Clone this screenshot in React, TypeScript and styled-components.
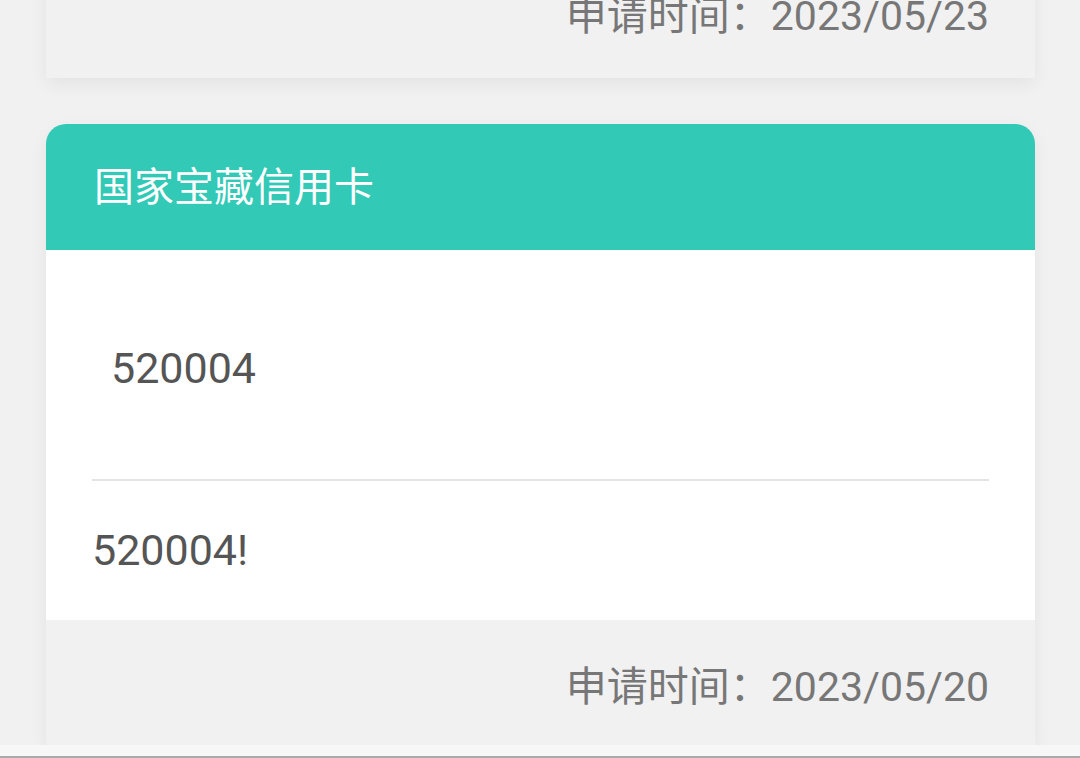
import React from "react";
import styled, { createGlobalStyle } from "styled-components";

const Global = createGlobalStyle`
  html, body { margin: 0; padding: 0; background: #f1f1f1; }
  body { font-family: Roboto, "Noto Sans CJK SC", sans-serif; overflow: hidden; }
  #root { height: 758px; }
`;

const Screen = styled.div`
  height: 758px;
  display: flex;
  flex-direction: column;
  background: #f1f1f1;
  overflow: hidden;
`;

const List = styled.div`
  flex: 1;
  overflow: hidden;
  display: flex;
  flex-direction: column;
  gap: 46px;
  padding: 0 45px 0 46px;
`;

const Card = styled.div<{ $offset?: number }>`
  margin-top: ${(p) => p.$offset ?? 0}px;
  border-radius: 20px 20px 0 0;
  box-shadow: 0 6px 18px rgba(0, 0, 0, 0.06);
  display: flex;
  flex-direction: column;
  flex-shrink: 0;
`;

const Header = styled.div`
  height: 126px;
  box-sizing: border-box;
  background: #32c9b6;
  border-radius: 20px 20px 0 0;
  display: flex;
  align-items: center;
  padding: 0 0 6px 48px;
  color: #ffffff;
  font-size: 40px;
  font-family: "Noto Sans CJK SC", sans-serif;
`;

const Body = styled.div`
  background: #ffffff;
  display: flex;
  flex-direction: column;
  padding: 0 46px;
  height: 370px;
`;

const Amount = styled.div`
  height: 231px;
  display: flex;
  align-items: center;
  padding-left: 19px;
  padding-top: 6px;
  box-sizing: border-box;
  font-size: 43px;
  color: #555555;
  border-bottom: 2px solid #e4e4e4;
`;

const Note = styled.div`
  flex: 1;
  display: flex;
  align-items: center;
  padding-bottom: 2px;
  font-size: 43px;
  color: #555555;
`;

const Footer = styled.div<{ $height?: number }>`
  height: ${(p) => p.$height ?? 125}px;
  background: #f1f1f1;
  display: flex;
  align-items: center;
  justify-content: flex-end;
  padding: 0 46px 0 0;
  font-size: 41px;
  color: #777777;
  font-family: Roboto, "Noto Sans CJK SC", sans-serif;
`;

const BottomBar = styled.div`
  height: 11px;
  background: #f7f7f7;
  border-bottom: 2px solid #aaaaaa;
  flex-shrink: 0;
`;

export default function App() {
  return (
    <>
      <Global />
      <Screen>
        <List>
          <Card $offset={-54}>
            <Footer $height={132}>申请时间：2023/05/23</Footer>
          </Card>
          <Card>
            <Header>国家宝藏信用卡</Header>
            <Body>
              <Amount>520004</Amount>
              <Note>520004!</Note>
            </Body>
            <Footer>申请时间：2023/05/20</Footer>
          </Card>
        </List>
        <BottomBar />
      </Screen>
    </>
  );
}
